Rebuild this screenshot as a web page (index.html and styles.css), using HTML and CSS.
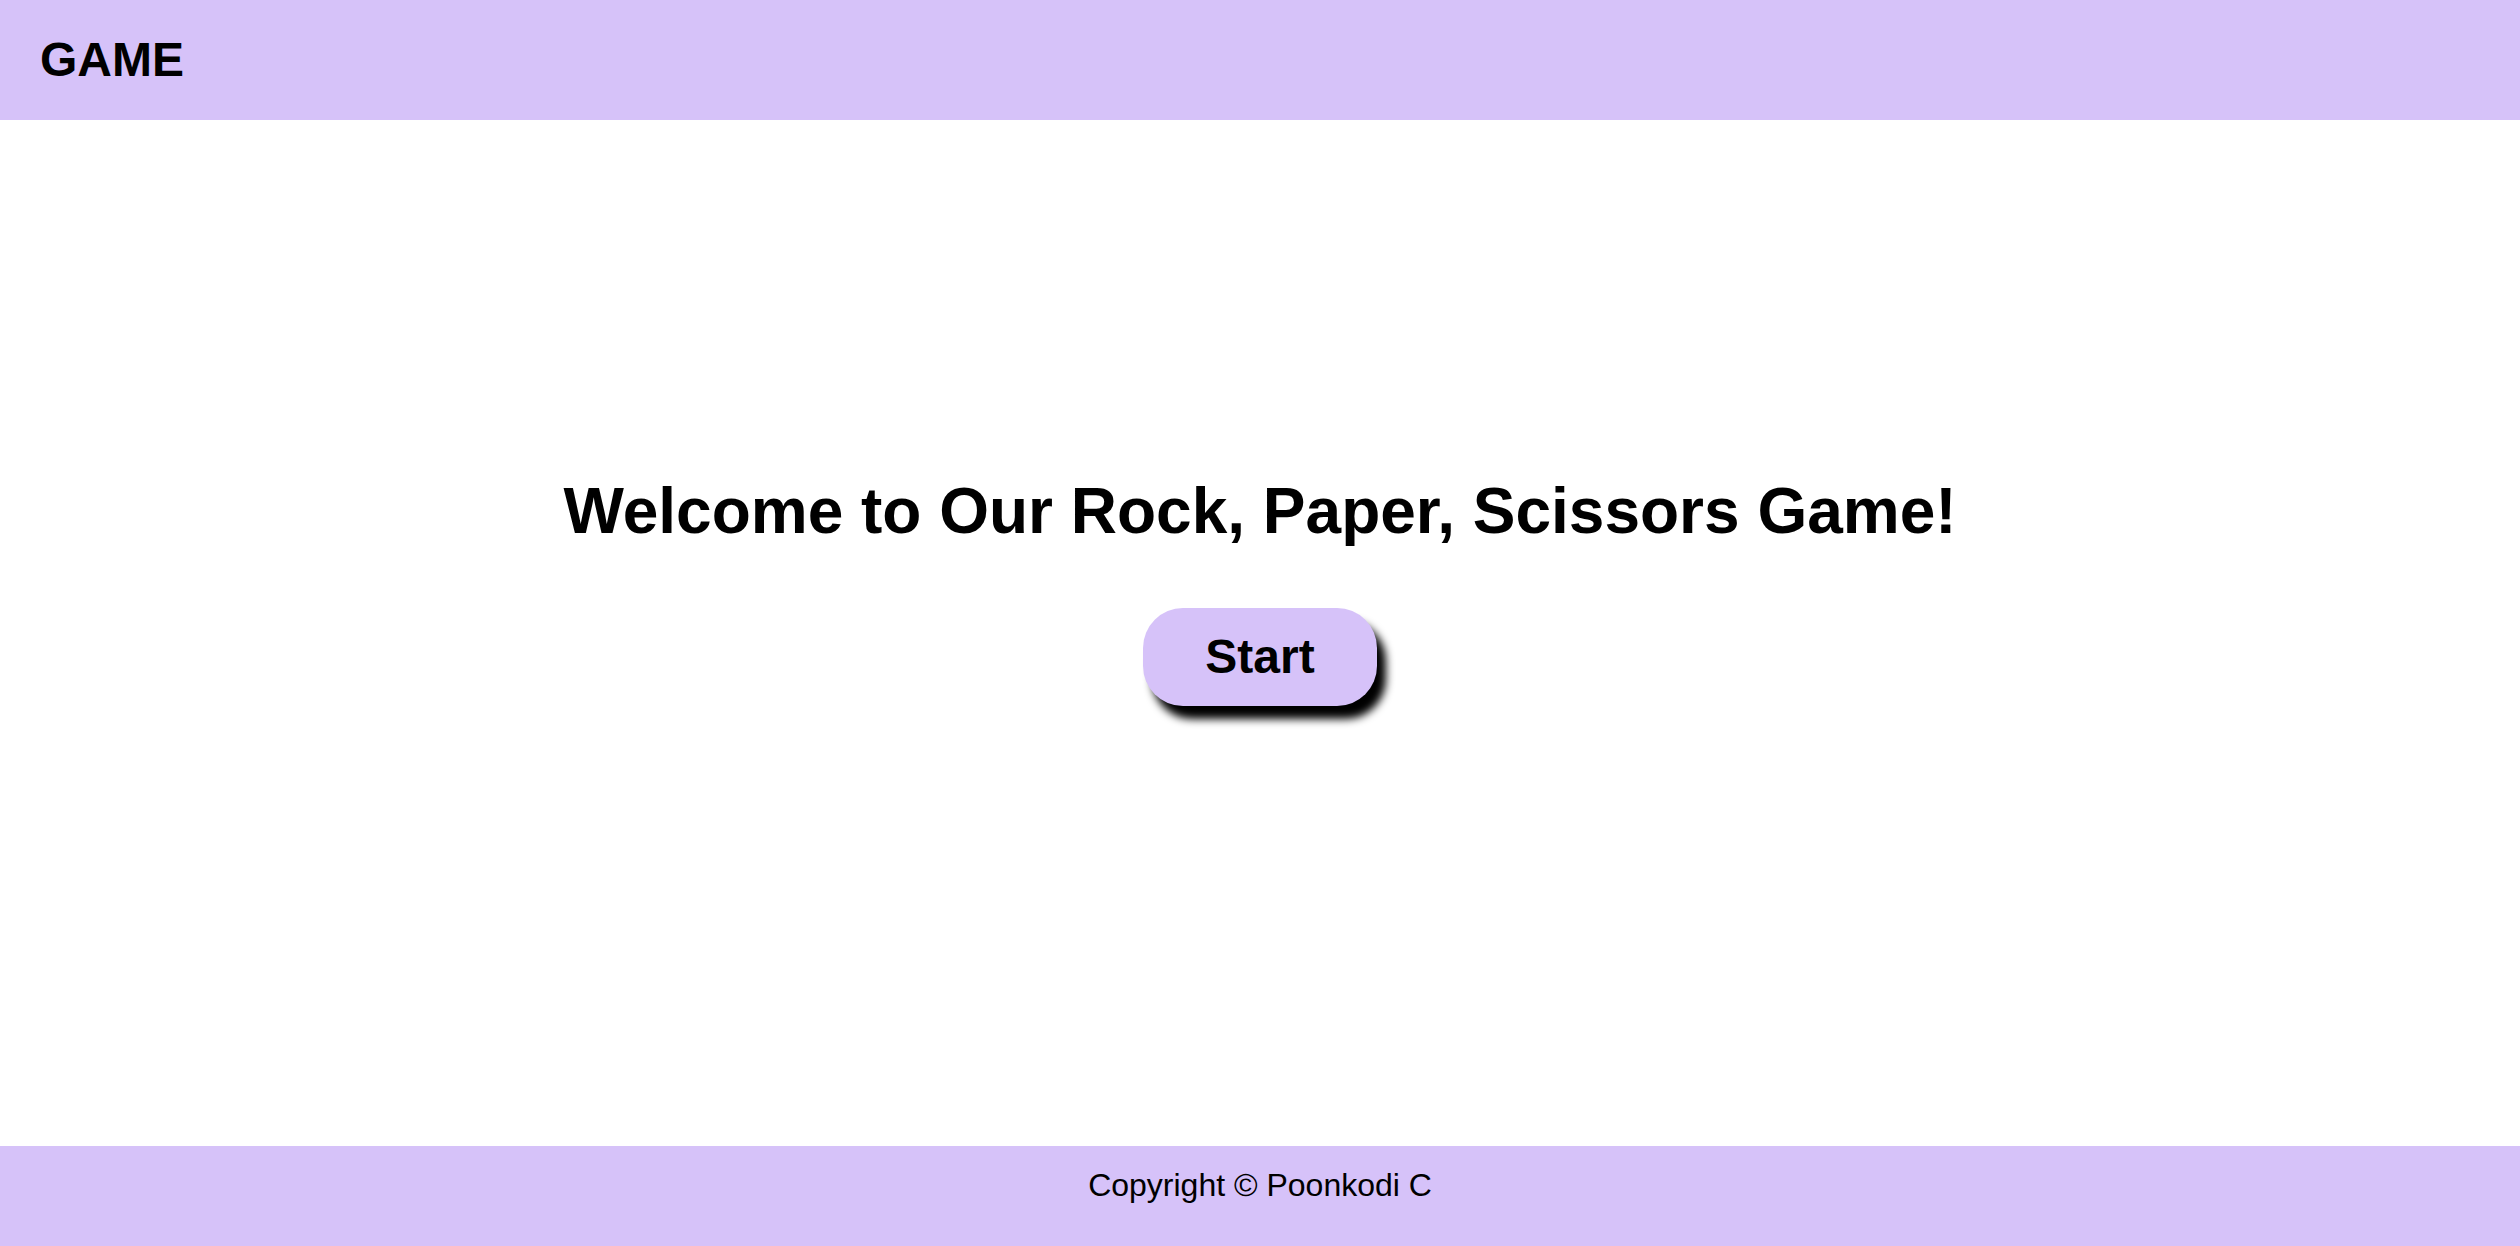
FILE: index.html
```html
<!DOCTYPE html>
<html lang="en">
<head>
<meta charset="utf-8">
<title>Game</title>
<link rel="stylesheet" href="styles.css">
</head>
<body>
<div class="page">
  <header class="header">
    <div class="logo">GAME</div>
  </header>
  <main class="main">
    <h1 class="title">Welcome to Our Rock, Paper, Scissors Game!</h1>
    <button class="start">Start</button>
  </main>
  <footer class="footer">
    <p class="copy">Copyright © Poonkodi C</p>
  </footer>
</div>
</body>
</html>
```

FILE: styles.css
```css
html, body {
  margin: 0;
  padding: 0;
  height: 100%;
}
body {
  font-family: "Liberation Sans", Arial, Helvetica, sans-serif;
  color: #000;
  background: #fff;
}
.page {
  display: flex;
  flex-direction: column;
  height: 1246px;
}
.header {
  height: 120px;
  box-sizing: border-box;
  background: #d6c2f9;
  padding: 32px 0 0 40px;
  flex: none;
}
.logo {
  font-size: 48px;
  font-weight: bold;
  line-height: 56px;
}
.main {
  flex: 1;
  display: flex;
  flex-direction: column;
  align-items: center;
  padding-top: 355px;
  box-sizing: border-box;
}
.title {
  margin: 0;
  font-size: 64px;
  line-height: 72px;
  font-weight: bold;
}
.start {
  margin-top: 61px;
  width: 234px;
  height: 98px;
  border: none;
  border-radius: 40px;
  background: #d6c2f9;
  font-family: "Liberation Sans", Arial, Helvetica, sans-serif;
  font-size: 48px;
  font-weight: bold;
  color: #000;
  box-shadow: 9px 13px 8px #000;
  padding: 0 0 2px;
  cursor: pointer;
}
.footer {
  height: 100px;
  box-sizing: border-box;
  background: #d6c2f9;
  flex: none;
  padding-top: 21px;
}
.copy {
  margin: 0;
  text-align: center;
  font-size: 32px;
  line-height: 37px;
}
```
